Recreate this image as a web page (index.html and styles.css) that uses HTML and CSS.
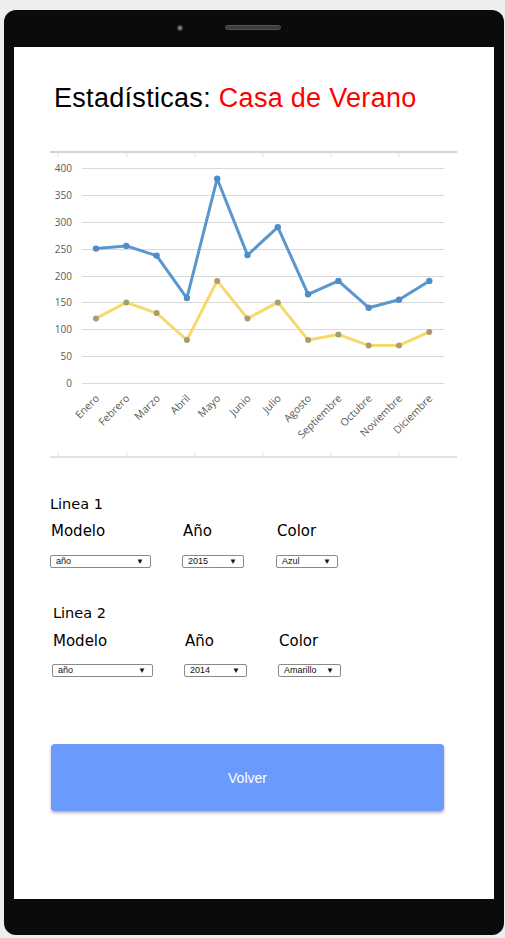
FILE: index.html
```html
<!DOCTYPE html>
<html lang="es">
<head>
<meta charset="utf-8">
<title>Estadísticas</title>
<link rel="stylesheet" href="styles.css">
</head>
<body>
<div class="phone">
  <div class="bezel-top">
    <span class="camera"></span>
    <span class="speaker"></span>
  </div>
  <main class="screen">
    <h1 class="title">Estadísticas: <span class="accent">Casa de Verano</span></h1>

    <svg class="chart" width="408" height="310" viewBox="0 0 408 310" xmlns="http://www.w3.org/2000/svg">
      <line x1="0" y1="2" x2="407" y2="2" stroke="#d4d4d4" stroke-width="2"/>
      <line x1="0" y1="307" x2="407" y2="307" stroke="#d9d9d9" stroke-width="1.5"/>
      <g stroke="#e4e4e4" stroke-width="1">
        <line x1="8" y1="3" x2="8" y2="7"/><line x1="77" y1="3" x2="77" y2="7"/><line x1="145" y1="3" x2="145" y2="7"/>
        <line x1="213" y1="3" x2="213" y2="7"/><line x1="281" y1="3" x2="281" y2="7"/><line x1="349" y1="3" x2="349" y2="7"/>
        <line x1="8" y1="302" x2="8" y2="306"/><line x1="77" y1="302" x2="77" y2="306"/><line x1="145" y1="302" x2="145" y2="306"/>
        <line x1="213" y1="302" x2="213" y2="306"/><line x1="281" y1="302" x2="281" y2="306"/><line x1="349" y1="302" x2="349" y2="306"/>
      </g>
      <g stroke="#d9d9d9" stroke-width="1">
        <line x1="32" y1="18.5" x2="394" y2="18.5"/>
        <line x1="32" y1="45.5" x2="394" y2="45.5"/>
        <line x1="32" y1="72.5" x2="394" y2="72.5"/>
        <line x1="32" y1="99.5" x2="394" y2="99.5"/>
        <line x1="32" y1="126.5" x2="394" y2="126.5"/>
        <line x1="32" y1="152.5" x2="394" y2="152.5"/>
        <line x1="32" y1="179.5" x2="394" y2="179.5"/>
        <line x1="32" y1="206.5" x2="394" y2="206.5"/>
        <line x1="32" y1="233.5" x2="394" y2="233.5"/>
      </g>
      <g class="axis" text-anchor="end">
        <text x="22" y="22">400</text>
        <text x="22" y="49">350</text>
        <text x="22" y="76">300</text>
        <text x="22" y="103">250</text>
        <text x="22" y="130">200</text>
        <text x="22" y="156">150</text>
        <text x="22" y="183">100</text>
        <text x="22" y="210">50</text>
        <text x="22" y="237">0</text>
      </g>
      <polyline fill="none" stroke="#f7d96b" stroke-width="3" stroke-linejoin="round"
        points="46,168.5 76.3,152.4 106.6,163.1 136.9,190 167.2,130.9 197.5,168.5 227.8,152.4 258.1,190 288.4,184.6 318.7,195.4 349,195.4 379.3,181.9"/>
      <g fill="#a89d6e">
        <circle cx="46" cy="168.5" r="3"/><circle cx="76.3" cy="152.4" r="3"/><circle cx="106.6" cy="163.1" r="3"/>
        <circle cx="136.9" cy="190" r="3"/><circle cx="167.2" cy="130.9" r="3"/><circle cx="197.5" cy="168.5" r="3"/>
        <circle cx="227.8" cy="152.4" r="3"/><circle cx="258.1" cy="190" r="3"/><circle cx="288.4" cy="184.6" r="3"/>
        <circle cx="318.7" cy="195.4" r="3"/><circle cx="349" cy="195.4" r="3"/><circle cx="379.3" cy="181.9" r="3"/>
      </g>
      <polyline fill="none" stroke="#5b97cf" stroke-width="3" stroke-linejoin="round"
        points="46,98.6 76.3,95.9 106.6,105.6 136.9,148.1 167.2,28.7 197.5,105.1 227.8,77.1 258.1,144.3 288.4,130.9 318.7,157.7 349,149.7 379.3,130.9"/>
      <g fill="#4f8cc9">
        <circle cx="46" cy="98.6" r="3.2"/><circle cx="76.3" cy="95.9" r="3.2"/><circle cx="106.6" cy="105.6" r="3.2"/>
        <circle cx="136.9" cy="148.1" r="3.2"/><circle cx="167.2" cy="28.7" r="3.2"/><circle cx="197.5" cy="105.1" r="3.2"/>
        <circle cx="227.8" cy="77.1" r="3.2"/><circle cx="258.1" cy="144.3" r="3.2"/><circle cx="288.4" cy="130.9" r="3.2"/>
        <circle cx="318.7" cy="157.7" r="3.2"/><circle cx="349" cy="149.7" r="3.2"/><circle cx="379.3" cy="130.9" r="3.2"/>
      </g>
      <g class="axis axis-x" text-anchor="end">
        <text x="50" y="249" transform="rotate(-45 50 249)">Enero</text>
        <text x="80.3" y="249" transform="rotate(-45 80.3 249)">Febrero</text>
        <text x="110.6" y="249" transform="rotate(-45 110.6 249)">Marzo</text>
        <text x="140.9" y="249" transform="rotate(-45 140.9 249)">Abril</text>
        <text x="171.2" y="249" transform="rotate(-45 171.2 249)">Mayo</text>
        <text x="201.5" y="249" transform="rotate(-45 201.5 249)">Junio</text>
        <text x="231.8" y="249" transform="rotate(-45 231.8 249)">Julio</text>
        <text x="262.1" y="249" transform="rotate(-45 262.1 249)">Agosto</text>
        <text x="292.4" y="249" transform="rotate(-45 292.4 249)">Septiembre</text>
        <text x="322.7" y="249" transform="rotate(-45 322.7 249)">Octubre</text>
        <text x="353" y="249" transform="rotate(-45 353 249)">Noviembre</text>
        <text x="383.3" y="249" transform="rotate(-45 383.3 249)">Diciembre</text>
      </g>
    </svg>

    <section class="linea linea-1">
      <h2 class="linea-title">Linea 1</h2>
      <div class="fields">
        <div class="field field-modelo">
          <span class="label">Modelo</span>
          <div class="select select-wide"><span>año</span><span class="arrow">▼</span></div>
        </div>
        <div class="field field-anio">
          <span class="label">Año</span>
          <div class="select select-narrow"><span>2015</span><span class="arrow">▼</span></div>
        </div>
        <div class="field">
          <span class="label">Color</span>
          <div class="select select-narrow"><span>Azul</span><span class="arrow">▼</span></div>
        </div>
      </div>
    </section>

    <section class="linea linea-2">
      <h2 class="linea-title">Linea 2</h2>
      <div class="fields">
        <div class="field field-modelo">
          <span class="label">Modelo</span>
          <div class="select select-wide"><span>año</span><span class="arrow">▼</span></div>
        </div>
        <div class="field field-anio">
          <span class="label">Año</span>
          <div class="select select-narrow2"><span>2014</span><span class="arrow">▼</span></div>
        </div>
        <div class="field">
          <span class="label">Color</span>
          <div class="select select-narrow2"><span>Amarillo</span><span class="arrow">▼</span></div>
        </div>
      </div>
    </section>

    <button class="btn-volver" type="button">Volver</button>
  </main>
  <div class="bezel-bottom"></div>
</div>
</body>
</html>
```

FILE: styles.css
```css
* { box-sizing: border-box; }

html, body {
  margin: 0;
  padding: 0;
  background: #eeeeee;
}

body {
  padding: 10px 1px 0 4px;
}

.phone {
  width: 500px;
  height: 925px;
  background: #0b0b0c;
  border-radius: 12px;
  padding: 0 10px;
  display: flex;
  flex-direction: column;
}

.bezel-top {
  height: 37px;
  flex: none;
  display: flex;
  align-items: center;
  gap: 42px;
  padding-left: 163px;
  padding-bottom: 2px;
}

.camera {
  width: 6px;
  height: 6px;
  border-radius: 50%;
  background: radial-gradient(circle, #9aa0ad 0, #3a3f4a 60%, #1b1d22 100%);
}

.speaker {
  width: 56px;
  height: 5px;
  border-radius: 3px;
  background: #3b3d42;
  border: 1px solid #505257;
}

.screen {
  height: 852px;
  flex: none;
  background: #ffffff;
  padding: 36px 0 0 36px;
  font-family: "Comic Sans MS", "DejaVu Sans", sans-serif;
  color: #000;
}

.bezel-bottom {
  flex: 1;
}

.title {
  margin: 0 0 37px 4px;
  height: 30px;
  font-family: "Comic Sans MS", "Liberation Sans", sans-serif;
  font-weight: normal;
  font-size: 27px;
  line-height: 30px;
  white-space: nowrap;
  letter-spacing: 0.3px;
}

.accent { color: #ff0000; }

.chart {
  display: block;
}

.axis {
  font-family: "Open Sans", "Liberation Sans", sans-serif;
  font-size: 10px;
  fill: #595959;
}

.axis-x {
  font-size: 10.5px;
}

.linea {
  display: flex;
  flex-direction: column;
}

.linea-1 { margin-top: 35px; }
.linea-2 { margin-top: 36px; padding-left: 3px; }

.linea-title {
  margin: 0;
  font-weight: normal;
  font-size: 14.5px;
  line-height: 18px;
  height: 18px;
}

.fields {
  display: flex;
  margin-top: 8px;
}

.linea-2 .fields { margin-top: 9px; }

.field {
  display: flex;
  flex-direction: column;
  gap: 14px;
}

.linea-2 .field { gap: 13px; }

.field-modelo { width: 133px; padding-left: 1px; }
.field-anio { width: 94px; }
.linea-2 .field-modelo { width: 132px; padding-left: 0; }

.label {
  font-size: 15px;
  line-height: 20px;
  height: 20px;
}

.select {
  height: 13px;
  border: 1px solid #8a8a8a;
  border-radius: 2px;
  display: flex;
  justify-content: space-between;
  align-items: center;
  padding: 0 6px 0 5px;
  font-family: "Liberation Sans", Arial, sans-serif;
  font-size: 9px;
  line-height: 11px;
  color: #111;
}

.select-wide { width: 101px; margin-left: -1px; }
.select-narrow { width: 62px; margin-left: -1px; }
.select-narrow2 { width: 63px; margin-left: -1px; }

.arrow {
  font-size: 8px;
  line-height: 11px;
}

.btn-volver {
  display: block;
  margin: 67px 0 0 1px;
  width: 393px;
  height: 67px;
  border: none;
  border-radius: 4px;
  background: #6a9bfc;
  color: #ffffff;
  font-family: "Liberation Sans", Arial, sans-serif;
  font-size: 14px;
  box-shadow: 0 2px 3px rgba(0, 0, 0, 0.3);
}
```
